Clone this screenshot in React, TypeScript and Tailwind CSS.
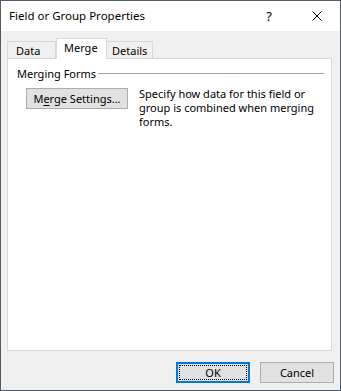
export default function App() {
  return (
    <div
      className="w-[341px] h-[391px] border border-[#525c66] bg-[#f0f0f0] flex flex-col text-[11px] text-black"
      style={{ fontFamily: '"Segoe UI", "Noto Sans", sans-serif' }}
    >
      {/* Title bar */}
      <div className="h-[30px] bg-white flex items-center pl-[8px] shrink-0">
        <span className="flex-1 leading-none text-[11.5px]">Field or Group Properties</span>
        <span className="w-[46px] text-center text-[13px] leading-none mr-[2px]">?</span>
        <span className="w-[46px] flex justify-center">
          <svg width="10" height="10" viewBox="0 0 10 10">
            <path d="M0.5 0.5 L9.5 9.5 M9.5 0.5 L0.5 9.5" stroke="#000" strokeWidth="1" />
          </svg>
        </span>
      </div>

      {/* Body */}
      <div className="flex-1 flex flex-col pl-[6px] pr-[8px] pt-[7px]">
        {/* Tabs */}
        <div className="flex items-end h-[20px] relative z-10">
          <div className="h-[17px] w-[49px] border border-b-0 border-[#d9d9d9] bg-[#f0f0f0] pl-[8px] leading-[17px]">
            Data
          </div>
          <div className="h-[21px] w-[51px] -mb-px border border-b-0 border-[#d9d9d9] bg-white pl-[7px] leading-[18px]">
            Merge
          </div>
          <div className="h-[17px] w-[46px] border border-b-0 border-l-0 border-[#d9d9d9] bg-[#f0f0f0] pl-[5px] leading-[17px]">
            Details
          </div>
        </div>

        {/* Panel */}
        <div className="flex-1 border border-[#d9d9d9] bg-white pl-[9px] pr-[7px] pt-[7px]">
          <div className="flex items-center h-[14px]">
            <span className="leading-none pr-[2px]">Merging Forms</span>
            <div className="flex-1 h-px bg-[#a0a0a0]" />
          </div>
          <div className="flex items-start mt-[9px] pl-[9px]">
            <button className="w-[102px] h-[21px] mt-[-1px] border border-[#adadad] bg-[#e1e1e1] leading-none shrink-0">
              M<span className="underline underline-offset-2">e</span>rge Settings...
            </button>
            <p className="ml-[11px] leading-[14px] -mt-[2px] whitespace-nowrap">
              Specify how data for this field or
              <br />
              group is combined when merging
              <br />
              forms.
            </p>
          </div>
        </div>

        {/* Footer */}
        <div className="flex justify-end gap-[10px] pt-[11px] pb-[7px] mr-[-2px]">
          <button className="w-[74px] h-[21px] border-2 border-[#0078d7] bg-[#e1e1e1] p-px">
            <div className="w-full h-full border border-dotted border-black flex items-center justify-center leading-none">
              OK
            </div>
          </button>
          <button className="w-[74px] h-[21px] border border-[#adadad] bg-[#e1e1e1] leading-none">
            Cancel
          </button>
        </div>
      </div>
    </div>
  );
}
